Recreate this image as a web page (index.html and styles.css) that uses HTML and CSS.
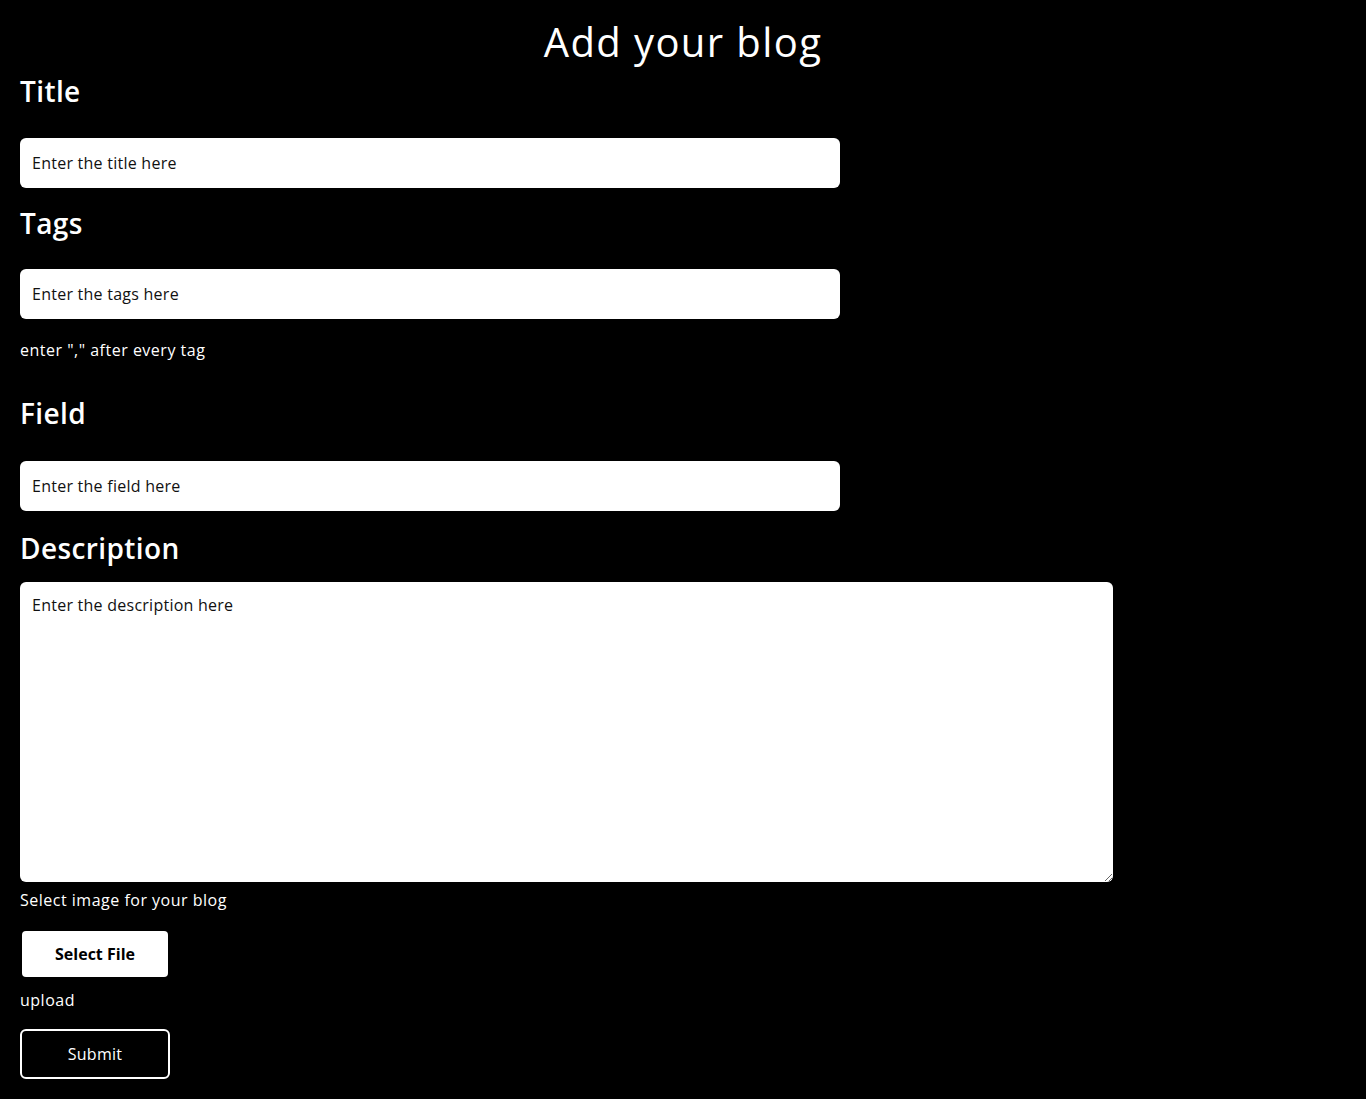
FILE: index.html
```html
<!DOCTYPE html>
<html lang="en">
<head>
<meta charset="utf-8">
<title>Add your blog</title>
<link rel="stylesheet" href="styles.css">
</head>
<body>
<h1 class="page-title">Add your blog</h1>
<form class="blog-form">
  <h2 class="label label-title">Title</h2>
  <input class="field field-title" type="text" placeholder="Enter the title here">
  <h2 class="label label-tags">Tags</h2>
  <input class="field" type="text" placeholder="Enter the tags here">
  <p class="hint hint-tags">enter "," after every tag</p>
  <h2 class="label label-field">Field</h2>
  <input class="field field-field" type="text" placeholder="Enter the field here">
  <h2 class="label label-desc">Description</h2>
  <textarea class="desc" placeholder="Enter the description here"></textarea>
  <p class="hint hint-image">Select image for your blog</p>
  <button type="button" class="select-btn">Select File</button>
  <p class="hint hint-upload">upload</p>
  <button type="button" class="submit-btn">Submit</button>
</form>
</body>
</html>
```

FILE: styles.css
```css
html, body {
  margin: 0;
  padding: 0;
  background: #000;
  color: #fff;
  font-family: "Open Sans", "Noto Sans", sans-serif;
}

.page-title {
  margin: 14px 0 0;
  font-size: 40px;
  line-height: 56px;
  font-weight: 500;
  letter-spacing: 1.4px;
  text-align: center;
}

.blog-form {
  display: flex;
  flex-direction: column;
  align-items: flex-start;
  padding: 0 20px;
}

.label {
  margin: 0;
  font-size: 28px;
  line-height: 42px;
  font-weight: 600;
  letter-spacing: 0.4px;
}

.label-title { margin-bottom: 26px; }
.label-tags { margin-top: 14px; margin-bottom: 25px; }
.label-field { margin-top: 30px; margin-bottom: 27px; }
.label-desc { margin-top: 16px; margin-bottom: 13px; }

.field {
  box-sizing: border-box;
  width: 820px;
  height: 50px;
  border: none;
  border-radius: 6px;
  padding: 0 12px;
  background: #fff;
  font-family: inherit;
  font-size: 16px;
  letter-spacing: 0.25px;
  color: #000;
  outline: none;
}

.field::placeholder,
.desc::placeholder {
  color: #111;
  opacity: 1;
}

.desc {
  box-sizing: border-box;
  width: 1093px;
  height: 300px;
  border: none;
  border-radius: 6px;
  padding: 12px;
  background: #fff;
  font-family: inherit;
  font-size: 16px;
  line-height: 22px;
  letter-spacing: 0.25px;
  color: #000;
  outline: none;
  resize: both;
}

.hint {
  margin: 0;
  font-size: 16px;
  line-height: 24px;
  letter-spacing: 0.5px;
}

.hint-tags { margin-top: 19px; }
.hint-image { margin-top: 6px; }
.hint-upload { margin-top: 11px; }

.select-btn {
  margin: 19px 0 0 2px;
  width: 146px;
  height: 46px;
  border: none;
  border-radius: 4px;
  background: #fff;
  color: #000;
  font-family: inherit;
  font-size: 16px;
  font-weight: 700;
  cursor: pointer;
}

.submit-btn {
  margin-top: 17px;
  width: 150px;
  height: 50px;
  box-sizing: border-box;
  border: 2px solid #fff;
  border-radius: 6px;
  background: #000;
  color: #fff;
  font-family: inherit;
  font-size: 16px;
  font-weight: 500;
  letter-spacing: 0.3px;
  cursor: pointer;
}
```
